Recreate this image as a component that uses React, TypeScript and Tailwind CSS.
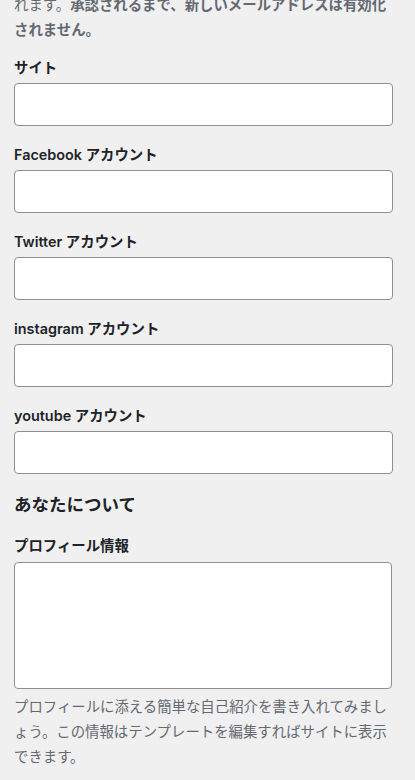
import React from "react";

const fields = [
  { id: "url", label: "サイト" },
  { id: "facebook", label: "Facebook アカウント" },
  { id: "twitter", label: "Twitter アカウント" },
  { id: "instagram", label: "instagram アカウント" },
  { id: "youtube", label: "youtube アカウント" },
];

const font = "font-['Inter','Noto_Sans_CJK_JP',sans-serif]";

const App = () => {
  return (
    <div className={`min-h-[780px] bg-[#f0f0f1] px-[14px] text-[#1d2327] ${font} overflow-hidden`}>
      <p className="-mt-[8.5px] mb-4 w-[379px] text-[14.4px] leading-[25px] text-[#646970] [line-break:loose]">
        れます。<strong className="font-semibold">承認されるまで、新しいメールアドレスは有効化されません。</strong>
      </p>

      {fields.map((f) => (
        <div key={f.id} className="mb-[19px]">
          <label htmlFor={f.id} className="mb-[5px] block text-[14.4px] font-semibold leading-[20px]">
            {f.label}
          </label>
          <input
            id={f.id}
            type="text"
            className="block h-[43px] w-[379px] rounded-[4px] border border-[#8c8f94] bg-white px-2"
          />
        </div>
      ))}

      <h2 className="mt-px mb-[19.5px] text-[17.5px] font-semibold leading-[24px]">あなたについて</h2>

      <label htmlFor="description" className="mb-[6px] block text-[14.4px] font-semibold leading-[20px]">
        プロフィール情報
      </label>
      <textarea
        id="description"
        className="block h-[127px] w-[378px] resize-none rounded-[4px] border border-[#8c8f94] bg-white"
      />
      <p className="mt-[4.5px] w-[379px] text-[14.4px] leading-[25px] text-[#646970] [line-break:loose]">
        プロフィールに添える簡単な自己紹介を書き入れてみましょう。この情報はテンプレートを編集すればサイトに表示できます。
      </p>
    </div>
  );
};

export default App;
